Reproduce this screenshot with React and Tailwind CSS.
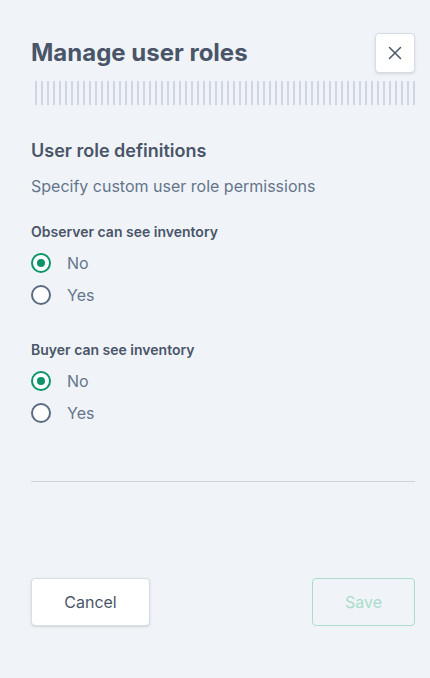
import React, { useState } from 'react';

const Radio = ({ checked, label, onClick }) => (
    <button type="button" onClick={onClick} className="flex items-center h-8 text-left">
        <span
            className={
                checked
                    ? 'w-5 h-5 rounded-full border-2 border-[#0b9467] flex items-center justify-center bg-white'
                    : 'w-5 h-5 rounded-full border-2 border-[#5b6b82] bg-white'
            }
        >
            {checked && <span className="w-2 h-2 rounded-full bg-[#0b9467]"></span>}
        </span>
        <span className="ml-4 text-base text-[#64748b]">{label}</span>
    </button>
);

const RoleSetting = ({ title, value, onChange }) => (
    <div>
        <p className="text-sm font-semibold text-[#4a5568] leading-5">{title}</p>
        <div className="mt-[5px] flex flex-col">
            <Radio checked={value === 'no'} label="No" onClick={() => onChange('no')} />
            <Radio checked={value === 'yes'} label="Yes" onClick={() => onChange('yes')} />
        </div>
    </div>
);

const App = () => {
    const [observer, setObserver] = useState('no');
    const [buyer, setBuyer] = useState('no');

    return (
        <div className="min-h-screen bg-[#f0f4f9] font-['Inter',sans-serif] pl-[31px] pr-[15px] pt-8 pb-[52px] flex flex-col w-[430px] h-[678px]">
            <div className="flex items-start justify-between">
                <h1 className="text-2xl font-bold text-[#4a5568] mt-[5px] leading-8">Manage user roles</h1>
                <button
                    type="button"
                    className="w-10 h-10 mt-[1px] bg-white border border-[#d5dde7] rounded shadow-sm flex items-center justify-center text-[#4a5568]"
                >
                    <svg width="16" height="16" viewBox="0 0 16 16" fill="none" stroke="currentColor" strokeWidth="1.5" strokeLinecap="round">
                        <path d="M2.5 2.5l11 11M13.5 2.5l-11 11" />
                    </svg>
                </button>
            </div>

            <div className="mt-2 ml-[4px] h-6 flex gap-1 overflow-hidden">
                {Array.from({ length: 64 }).map((_, i) => (
                    <span key={i} className="w-[2px] shrink-0 h-full bg-[#cdd6e2]"></span>
                ))}
            </div>

            <h2 className="mt-8 text-lg font-semibold text-[#4a5568] leading-7">User role definitions</h2>
            <p className="mt-[9px] text-base text-[#64748b] leading-6">Specify custom user role permissions</p>

            <div className="mt-[24px]">
                <RoleSetting title="Observer can see inventory" value={observer} onChange={setObserver} />
            </div>
            <div className="mt-[29px]">
                <RoleSetting title="Buyer can see inventory" value={buyer} onChange={setBuyer} />
            </div>

            <div className="mt-[52px] border-t border-[#cbd3df]"></div>

            <div className="mt-auto flex justify-between">
                <button
                    type="button"
                    className="w-[119px] h-12 bg-white border border-[#d5dde7] rounded shadow-sm text-base text-[#4a5568]"
                >
                    Cancel
                </button>
                <button
                    type="button"
                    disabled
                    className="w-[103px] h-12 border border-[#a9ddc9] rounded text-base text-[#a9ddc9] bg-transparent"
                >
                    Save
                </button>
            </div>
        </div>
    );
};

export default App;
